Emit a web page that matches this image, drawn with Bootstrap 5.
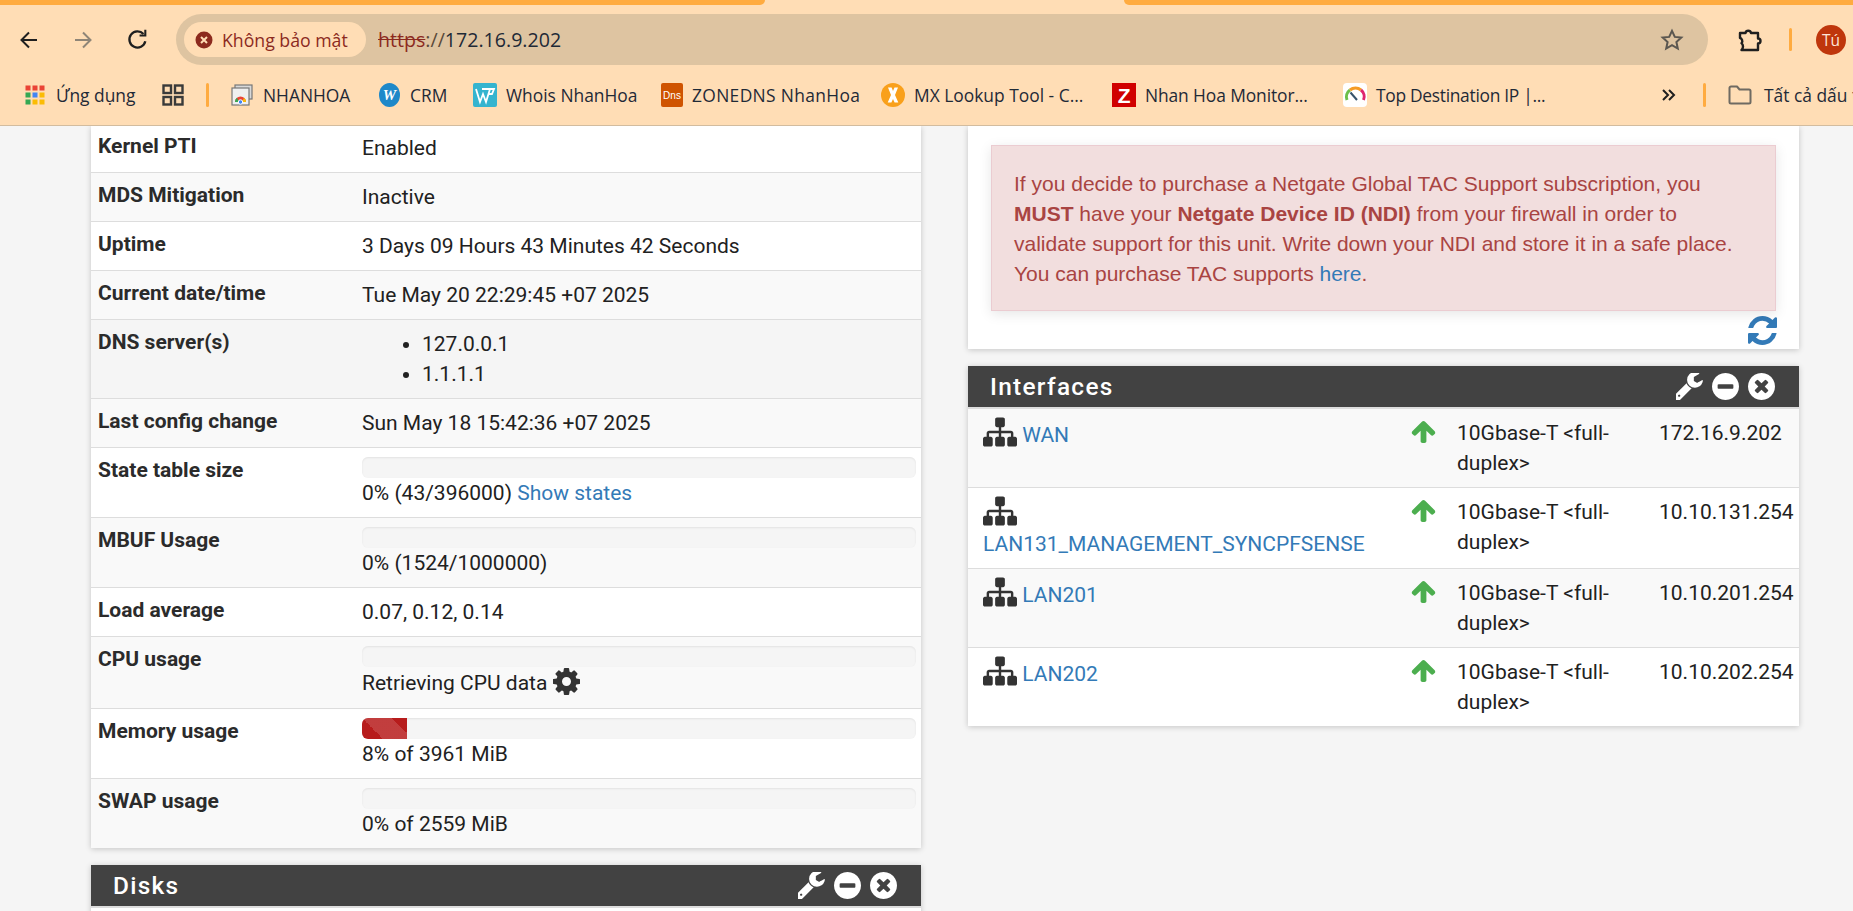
<!doctype html>
<html lang="vi">
<head>
<meta charset="utf-8">
<title>pfSense dashboard</title>
<link href="https://cdn.jsdelivr.net/npm/bootstrap@5.3.0/dist/css/bootstrap.min.css" rel="stylesheet">
<style>
html,body{height:911px;overflow:hidden;}
body{background:#f5f5f5;font-family:Roboto,"Liberation Sans",sans-serif;font-size:21px;line-height:30px;color:#212121;}
a{color:#337ab7;text-decoration:none;}
.chrome-top{background:#ffab40;}
.tab-strip{height:5px;background:#ffddb5;}
.tab-left{width:765px;background:#ffab40;border-bottom-right-radius:7px;}
.tab-right{margin-left:359px;background:#ffab40;border-bottom-left-radius:7px;}
.toolbar-row{height:69px;background:#ffddb5;padding-left:2px;}
.nav-btn{width:54px;height:30px;}
.omnibox{width:1532px;height:51px;margin-left:12px;background:#dec4a1;border-radius:26px;padding:0 8px;}
.sec-chip{width:182px;height:35px;background:#ffddb5;border-radius:18px;padding-left:11px;gap:9px;font-family:"Open Sans","Noto Sans",sans-serif;font-size:17.7px;color:#8c2a1e;white-space:nowrap;}
.url-text{margin-left:12px;font-family:"Open Sans","Noto Sans",sans-serif;font-size:19.6px;color:#5a4a3a;}
.url-strike{color:#8c2a1e;text-decoration:line-through;}
.url-host{color:#1f2a37;}
.tool-puzzle{margin-left:29px;width:28px;}
.tool-sep{width:3px;height:23px;margin-left:24px;background:#ffab40;border-radius:2px;}
.avatar-dot{width:30px;height:30px;margin-left:24px;border-radius:50%;background:#bf360c;color:#fde6d8;font-family:"Open Sans",sans-serif;font-size:15.5px;line-height:30px;text-align:center;flex:none;}
.bm-row{height:52px;background:#ffddb5;border-bottom:1px solid #d2bc9f;padding:0 0 9px 25px;overflow:hidden;font-family:"Open Sans","Noto Sans",sans-serif;font-size:17.4px;color:#1f2a37;white-space:nowrap;}
.bm{flex:none;display:flex;align-items:center;gap:10px;height:24px;line-height:24px;}
.bm:nth-child(1){width:137px;gap:11px;}
.bm:nth-child(2){width:44px;}
.bm:nth-child(3){width:25px;}
.bm:nth-child(4){width:148px;}
.bm:nth-child(5){width:94px;}
.bm:nth-child(6){width:188px;gap:9px;}
.bm:nth-child(7){width:220px;gap:9px;letter-spacing:.35px;}
.bm:nth-child(8){width:231px;gap:9px;}
.bm:nth-child(9){width:231px;gap:9px;letter-spacing:-.1px;}
.bm:nth-child(10){width:319px;gap:9px;letter-spacing:-.3px;}
.bm:nth-child(11){width:41px;}
.bm:nth-child(12){width:25px;}
.bm:nth-child(13){gap:12px;}
.bm-sep{width:3px;height:24px;background:#ffab40;border-radius:2px;}
.page-area{height:785px;overflow:hidden;padding-left:91px;gap:47px;}
.col-left{width:830px;flex:none;}
.col-right{width:831px;flex:none;}
.pf-panel{background:#fff;box-shadow:0 1px 6px rgba(0,0,0,.2);margin-bottom:17px;}
.pf-head{height:41px;background:#424242;color:#fff;padding:0 24px 0 22px;font-weight:500;font-size:24.4px;letter-spacing:1.3px;}
.pf-tools{gap:9px;}
.pf-sep{height:2px;background:#ddd;}
.sys-table,.if-table{margin:0;--bs-table-bg:transparent;--bs-table-color:#212121;table-layout:fixed;width:100%;}
.sys-table th,.sys-table td,.if-table td{padding:9px 8px;border-bottom:1px solid #ddd;line-height:30px;vertical-align:top;}
.sys-table th{padding:7px 7px 11px;font-weight:700;width:263px;color:#2b2b2b;}
.sys-table tr:nth-child(even)>*,.if-table tr:nth-child(odd)>*{background:#f9f9f9;}
.sys-table tr.row-hover>*{background:#f5f5f5;}
.sys-table tr:first-child>td{padding-top:7px;}
.sys-table tr:first-child>th{padding-top:5px;}
.sys-table tr:last-child>*,.if-table tr:last-child>*{border-bottom:0;}
.dns-list{margin:0;padding-left:60px;}
.bar-track{height:21px;width:554px;background:#f5f5f5;border-radius:6px;overflow:hidden;box-shadow:inset 0 1px 2px rgba(0,0,0,.08);}
.bar-fill{height:21px;background:#b71c1c;background-image:linear-gradient(45deg,rgba(255,255,255,.15) 25%,transparent 25%,transparent 50%,rgba(255,255,255,.15) 50%,rgba(255,255,255,.15) 75%,transparent 75%);background-size:60px 60px;}
.cpu-line{line-height:32px;}
.gear-ico{width:27px;height:27px;margin-block:-6px;vertical-align:1px;fill:#333;}
.disks-body{height:8px;background:#fff;}
.right-body{padding:19px 23px 0;height:223px;}
.pf-alert{background:#f2dede;border:1px solid #ebccd1;color:#a94442;padding:23px 22px 21px;margin:0;border-radius:0;font-family:"Liberation Sans",sans-serif;font-size:21px;line-height:30px;box-shadow:0 3px 12px rgba(0,0,0,.1);}
.pf-alert a{color:#337ab7;}
.pf-alert b{font-weight:700;}
.refresh-row{margin-top:5px;margin-right:-1px;line-height:0;}
.refresh-ico{width:29px;height:29px;fill:#337ab7;}
.if-table td.if-name{width:436px;padding-left:15px;}
.if-table td.if-state{width:45px;}
.if-table td.if-speed{width:202px;}
.net-ico{width:34px;height:34px;margin-block:-6px;vertical-align:-3px;fill:#333;}
.name-shift{vertical-align:-2px;}
.name-break{height:32px;display:flex;}
.name-break .net-ico{flex:none;margin:-3px 0 0;}
.name-line{display:block;}
.up-ico{width:27px;height:27px;fill:#4cae4f;margin-left:-2px;display:block;}
.head-ico{width:27px;height:27px;fill:#fff;display:block;}
</style>
</head>
<body>
<svg width="0" height="0" class="position-absolute">
  <symbol id="i-wrench" viewBox="120 120 1530 1530"><path d="M363 1408q0-26-19-45t-45-19-45 19-19 45 19 45 45 19 45-19 19-45zm644-420l-682 682q-37 37-90 37-52 0-91-37l-106-108q-38-36-38-90 0-53 38-91l681-681q39 98 114.500 173.500t173.500 114.500zm634-435q0 39-23 106-47 134-164.500 217.500t-258.500 83.500q-185 0-316.500-131.500t-131.500-316.500 131.500-316.500 316.500-131.500q58 0 121.500 16.500t107.500 46.500q16 11 16 28t-16 28l-293 169v224l193 107q5-3 79-48.500t135.500-81 70.500-35.500q15 0 23.500 10t8.500 25z"/></symbol>
  <symbol id="i-minus" viewBox="0 128 1536 1536"><path d="M1216 960v-128q0-26-19-45t-45-19h-768q-26 0-45 19t-19 45v128q0 26 19 45t45 19h768q26 0 45-19t19-45zm320-64q0 209-103 385.500t-279.500 279.500-385.500 103-385.500-103-279.500-279.500-103-385.500 103-385.500 279.500-279.500 385.500-103 385.500 103 279.500 279.500 103 385.500z"/></symbol>
  <symbol id="i-times" viewBox="0 128 1536 1536"><path d="M1149 1122q0-26-19-45l-181-181 181-181q19-19 19-45 0-27-19-46l-90-90q-19-19-46-19-26 0-45 19l-181 181-181-181q-19-19-45-19-27 0-46 19l-90 90q-19 19-19 46 0 26 19 45l181 181-181 181q-19 19-19 45 0 27 19 46l90 90q19 19 46 19 26 0 45-19l181-181 181 181q19 19 45 19 27 0 46-19l90-90q19-19 19-46zm387-226q0 209-103 385.500t-279.500 279.500-385.500 103-385.500-103-279.500-279.500-103-385.500 103-385.500 279.500-279.500 385.500-103 385.500 103 279.500 279.500 103 385.500z"/></symbol>
  <symbol id="i-net" viewBox="0 0 1792 1792"><path d="M1792 1248v320q0 40-28 68t-68 28h-320q-40 0-68-28t-28-68v-320q0-40 28-68t68-28h96v-192h-512v192h96q40 0 68 28t28 68v320q0 40-28 68t-68 28h-320q-40 0-68-28t-28-68v-320q0-40 28-68t68-28h96v-192h-512v192h96q40 0 68 28t28 68v320q0 40-28 68t-68 28h-320q-40 0-68-28t-28-68v-320q0-40 28-68t68-28h96v-192q0-52 38-90t90-38h512v-192h-96q-40 0-68-28t-28-68v-320q0-40 28-68t68-28h320q40 0 68 28t28 68v320q0 40-28 68t-68 28h-96v192h512q52 0 90 38t38 90v192h96q40 0 68 28t28 68z"/></symbol>
  <symbol id="i-up" viewBox="0 0 1792 1792"><path d="M1675 971q0 51-37 90l-75 75q-38 38-91 38-54 0-90-38l-294-293v704q0 52-37.500 84.500t-90.500 32.500h-128q-53 0-90.500-32.500t-37.500-84.500v-704l-294 293q-36 38-90 38t-90-38l-75-75q-38-38-38-90 0-53 38-91l651-651q35-37 90-37 54 0 91 37l651 651q37 39 37 91z"/></symbol>
</svg>

<header class="chrome-top">
  <div class="tab-strip d-flex">
    <div class="tab-left"></div>
    <div class="tab-right flex-grow-1"></div>
  </div>
  <div class="toolbar-row d-flex align-items-center">
    <div class="nav-btn d-flex align-items-center justify-content-center">
      <svg width="20" height="20" viewBox="0 0 20 20" fill="none" stroke="#1f1f1f" stroke-width="2"><path d="M18 10H2.500M10 2.500 2.500 10l7.500 7.500"/></svg>
    </div>
    <div class="nav-btn d-flex align-items-center justify-content-center">
      <svg width="20" height="20" viewBox="0 0 20 20" fill="none" stroke="#8f8577" stroke-width="2"><path d="M2 10h15.500M10 2.500 17.500 10 10 17.500"/></svg>
    </div>
    <div class="nav-btn d-flex align-items-center justify-content-center">
      <svg width="23" height="23" viewBox="0 0 20 20" fill="none" stroke="#1f1f1f" stroke-width="2"><path d="M16.800 11.500a7 7 0 1 1-1.600-6.200"/><path d="M16.800 1.500v5h-5" stroke-width="1.800"/></svg>
    </div>
    <div class="omnibox d-flex align-items-center">
      <div class="sec-chip d-flex align-items-center">
        <svg width="18" height="18" viewBox="0 0 18 18"><circle cx="9" cy="9" r="8.500" fill="#8c2a1e"/><path d="M6 6l6 6M12 6l-6 6" stroke="#ffddb5" stroke-width="2"/></svg>
        <span>Không bảo mật</span>
      </div>
      <div class="url-text"><span class="url-strike">https</span>://<span class="url-host">172.16.9.202</span></div>
      <div class="ms-auto me-3 d-flex align-items-center">
        <svg width="24" height="24" viewBox="0 0 24 24" fill="none" stroke="#5b5750" stroke-width="2"><path d="M12 2.800l2.800 6.100 6.500.7-4.900 4.400 1.400 6.500L12 17.200l-5.800 3.300 1.400-6.500-4.900-4.400 6.500-.7z"/></svg>
      </div>
    </div>
    <div class="tool-puzzle d-flex align-items-center">
      <svg width="26" height="26" viewBox="0 0 26 26" fill="none" stroke="#1f1f1f" stroke-width="2.400" stroke-linejoin="round"><path d="M3 6h5.500a2.800 2.800 0 0 1 5.500 0H21v5.500a2.500 2.500 0 0 1 0 5V23H4.500c2-2.200 2-5 0-6.800 2-1.800 0-5-1.500-5.200z"/></svg>
    </div>
    <div class="tool-sep"></div>
    <div class="avatar-dot">Tú</div>
  </div>
  <nav class="bm-row d-flex align-items-center">
    <div class="bm">
      <svg width="20" height="20" viewBox="0 0 20 20"><g fill="#ea4335"><rect width="5" height="5" x="0.500" y="0.500"/><rect width="5" height="5" x="7.500" y="0.500"/><rect width="5" height="5" x="14.500" y="0.500"/></g><rect width="5" height="5" x="0.500" y="7.500" fill="#34a853"/><rect width="5" height="5" x="7.500" y="7.500" fill="#4285f4"/><rect width="5" height="5" x="14.500" y="7.500" fill="#fbbc04"/><rect width="5" height="5" x="0.500" y="14.500" fill="#34a853"/><rect width="5" height="5" x="7.500" y="14.500" fill="#fbbc04"/><rect width="5" height="5" x="14.500" y="14.500" fill="#fbbc04"/></svg>
      <span>Ứng dụng</span>
    </div>
    <div class="bm">
      <svg width="22" height="22" viewBox="0 0 22 22" fill="none" stroke="#3a3a3a" stroke-width="2.400"><rect x="1.500" y="1.500" width="7.500" height="7.500"/><rect x="13" y="1.500" width="7.500" height="7.500"/><rect x="1.500" y="13" width="7.500" height="7.500"/><rect x="13" y="13" width="7.500" height="7.500"/></svg>
    </div>
    <div class="bm"><div class="bm-sep"></div></div>
    <div class="bm">
      <svg width="22" height="22" viewBox="0 0 22 22"><rect x="4" y="1" width="17" height="14" fill="#d9d9d9" stroke="#777" stroke-width="1.200"/><rect x="1" y="4" width="17" height="17" fill="#efefef" stroke="#777" stroke-width="1.200"/><path d="M4 18a5.500 5.500 0 0 1 11 0z" fill="#ea4335"/><path d="M4 18a5.500 5.500 0 0 1 2-4.200l2 4.200z" fill="#34a853"/><path d="M15 18a5.500 5.500 0 0 0-2-4.200l-2 4.200z" fill="#fbbc04"/><circle cx="9.500" cy="18" r="2.200" fill="#4285f4" stroke="#fff"/></svg>
      <span>NHANHOA</span>
    </div>
    <div class="bm">
      <svg width="21" height="24" viewBox="0 0 21 24"><ellipse cx="10.500" cy="12" rx="10.500" ry="12" fill="#1e88c9"/><text x="10.500" y="17" font-family="Liberation Serif,serif" font-size="15" font-weight="700" font-style="italic" fill="#fff" text-anchor="middle">W</text></svg>
      <span>CRM</span>
    </div>
    <div class="bm">
      <svg width="24" height="24" viewBox="0 0 24 24"><rect width="24" height="24" rx="2" fill="#35b4cf"/><path d="M3 6l4 13 3-8 3 8 4-13M9 6h12l-2 5h-3" fill="none" stroke="#fff" stroke-width="1.800"/></svg>
      <span>Whois NhanHoa</span>
    </div>
    <div class="bm">
      <svg width="22" height="24" viewBox="0 0 22 24"><rect width="22" height="24" rx="2" fill="#cf5300"/><text x="11" y="16" font-family="Liberation Sans,sans-serif" font-size="10" letter-spacing="0" fill="#fff" text-anchor="middle">Dns</text></svg>
      <span>ZONEDNS NhanHoa</span>
    </div>
    <div class="bm">
      <svg width="24" height="24" viewBox="0 0 24 24"><circle cx="12" cy="12" r="12" fill="#f9a01b"/><path d="M7 4.500h3.600L12 8l1.500-3.500H17L14 12l3.300 7.500h-3.700L12 16l-1.600 3.500H6.700L10 12z" fill="#fff"/></svg>
      <span>MX Lookup Tool - C...</span>
    </div>
    <div class="bm">
      <svg width="24" height="24" viewBox="0 0 24 24"><rect width="24" height="24" fill="#d00000"/><text x="12" y="20" font-family="Liberation Sans,sans-serif" font-size="21" font-weight="700" fill="#fff" text-anchor="middle">Z</text></svg>
      <span>Nhan Hoa Monitor...</span>
    </div>
    <div class="bm">
      <svg width="24" height="24" viewBox="0 0 24 24"><rect width="24" height="24" rx="4" fill="#fff"/><path d="M4 17A8.500 8.500 0 0 1 7 7" fill="none" stroke="#6dbf4b" stroke-width="3"/><path d="M7 7a8.500 8.500 0 0 1 11 0" fill="none" stroke="#f59b23" stroke-width="3"/><path d="M18 7a8.500 8.500 0 0 1 2.500 10" fill="none" stroke="#e0246e" stroke-width="3"/><path d="M7.500 9.500 14 17" stroke="#36536b" stroke-width="2"/></svg>
      <span>Top Destination IP |...</span>
    </div>
    <div class="bm">
      <svg width="14" height="14" viewBox="0 0 14 14" fill="none" stroke="#1f1f1f" stroke-width="2"><path d="M1 2l5 5-5 5M7 2l5 5-5 5"/></svg>
    </div>
    <div class="bm"><div class="bm-sep"></div></div>
    <div class="bm">
      <svg width="24" height="20" viewBox="0 0 24 20" fill="none" stroke="#6f6a62" stroke-width="2" stroke-linejoin="round"><path d="M1.500 3a1.500 1.500 0 0 1 1.500-1.500h6l2.500 3H21a1.500 1.500 0 0 1 1.500 1.500v11A1.500 1.500 0 0 1 21 18.500H3A1.500 1.500 0 0 1 1.500 17z"/></svg>
      <span>Tất cả dấu trang</span>
    </div>
  </nav>
</header>

<main class="page-area d-flex align-items-start">
  <section class="col-left">
    <div class="pf-panel">
      <table class="table sys-table">
        <tbody>
          <tr><th>Kernel PTI</th><td>Enabled</td></tr>
          <tr><th>MDS Mitigation</th><td>Inactive</td></tr>
          <tr><th>Uptime</th><td>3 Days 09 Hours 43 Minutes 42 Seconds</td></tr>
          <tr><th>Current date/time</th><td>Tue May 20 22:29:45 +07 2025</td></tr>
          <tr class="row-hover"><th>DNS server(s)</th><td><ul class="dns-list"><li>127.0.0.1</li><li>1.1.1.1</li></ul></td></tr>
          <tr><th>Last config change</th><td>Sun May 18 15:42:36 +07 2025</td></tr>
          <tr><th>State table size</th><td><div class="bar-track"></div>0% (43/396000) <a href="#">Show states</a></td></tr>
          <tr><th>MBUF Usage</th><td><div class="bar-track"></div>0% (1524/1000000)</td></tr>
          <tr><th>Load average</th><td>0.07, 0.12, 0.14</td></tr>
          <tr><th>CPU usage</th><td><div class="bar-track"></div><div class="cpu-line">Retrieving CPU data <svg class="gear-ico" viewBox="128 128 1536 1536"><path d="M1152 896q0-106-75-181t-181-75-181 75-75 181 75 181 181 75 181-75 75-181zm512-109v222q0 12-8 23t-20 13l-185 28q-19 54-39 91 35 50 107 138 10 12 10 25t-9 23q-27 37-99 108t-94 71q-12 0-26-9l-138-108q-44 23-91 38-16 136-29 186-7 28-36 28h-222q-14 0-24.500-8.500t-11.500-21.500l-28-184q-49-16-90-37l-141 107q-10 9-25 9-14 0-25-11-126-114-165-168-7-10-7-23 0-12 8-23 15-21 51-66.500t54-70.500q-27-50-41-99l-183-27q-13-2-21-12.500t-8-23.500v-222q0-12 8-23t19-13l186-28q14-46 39-92-40-57-107-138-10-12-10-24 0-10 9-23 26-36 98.500-107.500t94.500-71.500q13 0 26 10l138 107q44-23 91-38 16-136 29-186 7-28 36-28h222q14 0 24.500 8.500t11.500 21.500l28 184q49 16 90 37l142-107q9-9 24-9 13 0 25 10 129 119 165 170 7 8 7 22 0 12-8 23-15 21-51 66.500t-54 70.500q26 50 41 98l183 28q13 2 21 12.500t8 23.500z"/></svg></div></td></tr>
          <tr><th>Memory usage</th><td><div class="bar-track"><div class="bar-fill" style="width:8.200%"></div></div>8% of 3961 MiB</td></tr>
          <tr><th>SWAP usage</th><td><div class="bar-track"></div>0% of 2559 MiB</td></tr>
        </tbody>
      </table>
    </div>
    <div class="pf-panel">
      <div class="pf-head d-flex align-items-center justify-content-between">
        <span>Disks</span>
        <div class="pf-tools d-flex align-items-center">
          <svg class="head-ico"><use href="#i-wrench"/></svg>
          <svg class="head-ico"><use href="#i-minus"/></svg>
          <svg class="head-ico"><use href="#i-times"/></svg>
        </div>
      </div>
      <div class="pf-sep"></div>
      <div class="disks-body"></div>
    </div>
  </section>

  <section class="col-right">
    <div class="pf-panel">
      <div class="right-body">
        <div class="alert pf-alert">If you decide to purchase a Netgate Global TAC Support subscription, you <b>MUST</b> have your <b>Netgate Device ID (NDI)</b> from your firewall in order to validate support for this unit. Write down your NDI and store it in a safe place. You can purchase TAC supports <a href="#">here</a>.</div>
        <div class="refresh-row text-end">
          <svg class="refresh-ico" viewBox="128 128 1536 1536"><path d="M1639 1056q0 5-1 7-64 268-268 434.500t-478 166.500q-146 0-282.500-55t-243.500-157l-129 129q-19 19-45 19t-45-19-19-45v-448q0-26 19-45t45-19h448q26 0 45 19t19 45-19 45l-137 137q71 66 161 102t187 36q134 0 250-65t186-179q11-17 53-117 8-23 30-23h192q13 0 22.500 9.500t9.500 22.500zm25-800v448q0 26-19 45t-45 19h-448q-26 0-45-19t-19-45 19-45l138-138q-148-137-349-137-134 0-250 65t-186 179q-11 17-53 117-8 23-30 23h-199q-13 0-22.500-9.500t-9.500-22.500v-7q65-268 270-434.500t480-166.500q146 0 284 55.500t245 156.500l130-129q19-19 45-19t45 19 19 45z"/></svg>
        </div>
      </div>
    </div>
    <div class="pf-panel">
      <div class="pf-head d-flex align-items-center justify-content-between">
        <span>Interfaces</span>
        <div class="pf-tools d-flex align-items-center">
          <svg class="head-ico"><use href="#i-wrench"/></svg>
          <svg class="head-ico"><use href="#i-minus"/></svg>
          <svg class="head-ico"><use href="#i-times"/></svg>
        </div>
      </div>
      <div class="pf-sep"></div>
      <table class="table if-table">
        <tbody>
          <tr>
            <td class="if-name"><svg class="net-ico"><use href="#i-net"/></svg> <a class="name-shift" href="#">WAN</a></td>
            <td class="if-state"><svg class="up-ico"><use href="#i-up"/></svg></td>
            <td class="if-speed">10Gbase-T &lt;full-duplex&gt;</td>
            <td>172.16.9.202</td>
          </tr>
          <tr>
            <td class="if-name"><span class="name-break"><svg class="net-ico"><use href="#i-net"/></svg></span><a class="name-line" href="#">LAN131_MANAGEMENT_SYNCPFSENSE</a></td>
            <td class="if-state"><svg class="up-ico"><use href="#i-up"/></svg></td>
            <td class="if-speed">10Gbase-T &lt;full-duplex&gt;</td>
            <td>10.10.131.254</td>
          </tr>
          <tr>
            <td class="if-name"><svg class="net-ico"><use href="#i-net"/></svg> <a class="name-shift" href="#">LAN201</a></td>
            <td class="if-state"><svg class="up-ico"><use href="#i-up"/></svg></td>
            <td class="if-speed">10Gbase-T &lt;full-duplex&gt;</td>
            <td>10.10.201.254</td>
          </tr>
          <tr>
            <td class="if-name"><svg class="net-ico"><use href="#i-net"/></svg> <a class="name-shift" href="#">LAN202</a></td>
            <td class="if-state"><svg class="up-ico"><use href="#i-up"/></svg></td>
            <td class="if-speed">10Gbase-T &lt;full-duplex&gt;</td>
            <td>10.10.202.254</td>
          </tr>
        </tbody>
      </table>
    </div>
  </section>
</main>
<script src="https://cdn.jsdelivr.net/npm/bootstrap@5.3.0/dist/js/bootstrap.bundle.min.js"></script>
</body>
</html>
